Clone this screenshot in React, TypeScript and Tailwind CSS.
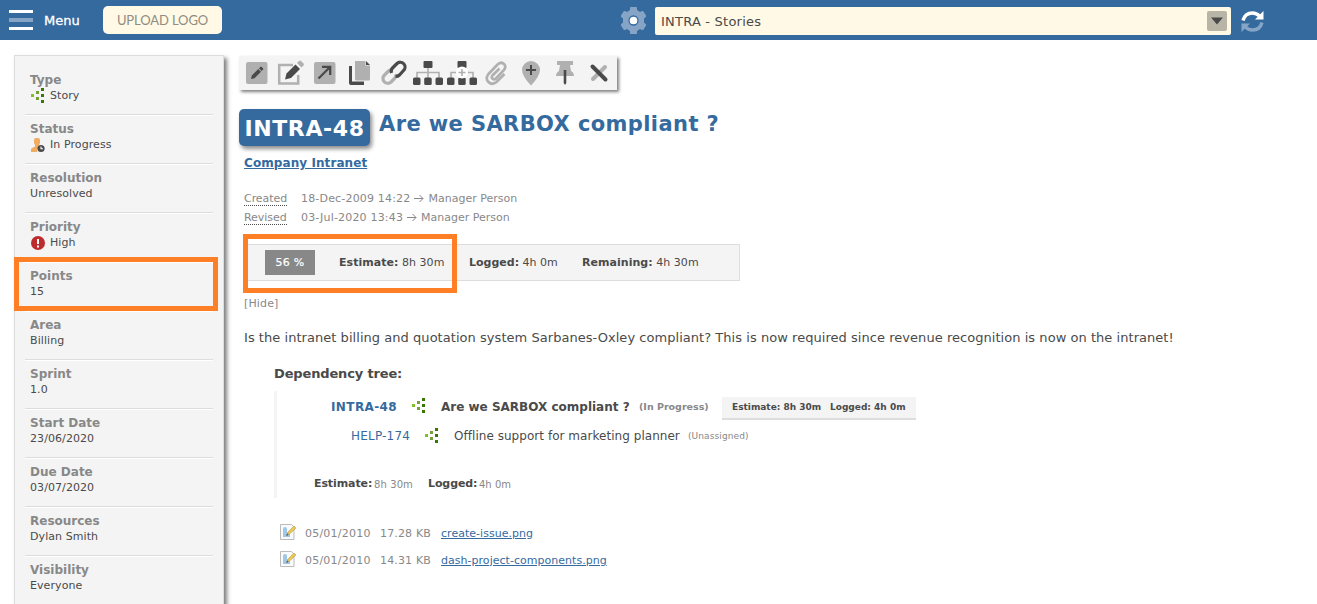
import type { ReactNode } from "react";

function StoryIcon({ className = "" }: { className?: string }) {
  return (
    <svg className={`shrink-0 ${className}`} width="14" height="15" viewBox="0 0 14 15" shapeRendering="crispEdges">
      <rect x="0" y="6" width="3" height="3" fill="#83bf2b" />
      <rect x="5" y="3" width="3" height="3" fill="#73a137" />
      <rect x="5" y="9" width="3" height="3" fill="#73a137" />
      <rect x="10" y="0" width="3" height="3" fill="#387800" />
      <rect x="10" y="6" width="3" height="3" fill="#387800" />
      <rect x="10" y="12" width="3" height="3" fill="#387800" />
    </svg>
  );
}

function PersonIcon() {
  return (
    <svg className="mr-[5px] ml-px shrink-0" width="14" height="15" viewBox="0 0 14 15">
      <path d="M3 2q0-2 2-2h2q2 0 2 2v3L8 7v1.500L6.500 10 6 14H0v-2.500Q0 10 2 9.500L4 8.500V7L3 5z" fill="#f0ad62" />
      <circle cx="10" cy="10.500" r="3.600" fill="#4a4a4a" />
      <path d="M10 8.500v2.200h2" stroke="#fff" fill="none" strokeWidth="1.100" />
    </svg>
  );
}

function HighIcon() {
  return (
    <svg className="mr-[5px] ml-px shrink-0" width="14" height="14" viewBox="0 0 14 14">
      <circle cx="7" cy="7" r="7" fill="#bd2c2c" />
      <path d="M6 3h2v5H6zM6 9.500h2v2H6z" fill="#fff" />
    </svg>
  );
}

const fields: { label: string; value: string; icon?: ReactNode }[] = [
  { label: "Type", value: "Story", icon: <StoryIcon className="mr-[5px] mb-px ml-px" /> },
  { label: "Status", value: "In Progress", icon: <PersonIcon /> },
  { label: "Resolution", value: "Unresolved" },
  { label: "Priority", value: "High", icon: <HighIcon /> },
  { label: "Points", value: "15" },
  { label: "Area", value: "Billing" },
  { label: "Sprint", value: "1.0" },
  { label: "Start Date", value: "23/06/2020" },
  { label: "Due Date", value: "03/07/2020" },
  { label: "Resources", value: "Dylan Smith" },
  { label: "Visibility", value: "Everyone" },
];

function Header() {
  return (
    <header className="flex h-10 shrink-0 items-center bg-[#356a9f]">
      <svg className="ml-[9px]" width="24" height="22" viewBox="0 0 24 22" shapeRendering="crispEdges">
        <rect y="1" width="24" height="3" fill="#fff" />
        <rect y="9" width="24" height="4" fill="#86a5c6" />
        <rect y="18" width="24" height="3" fill="#fff" />
      </svg>
      <span className="ml-[11px] w-[48px] pt-px text-[13px] text-white [-webkit-text-stroke:0.3px_white]">Menu</span>
      <button className="ml-[11px] h-7 w-[119px] rounded-[5px] bg-[#fff9e6] pt-px font-[Lato] text-[13px] tracking-[-0.1px] text-[#8f8d80]">
        UPLOAD LOGO
      </button>
      <svg className="ml-[398px]" width="27" height="27" viewBox="0 0 27 27">
        <path
          d="M10 1q0-1 1-1h5q1 0 1 1v2l3 2 2-1q1-.4 1.500.5l2.500 4q.5 1-.3 1.500L24 11.500v4l1.700 1.500q.8.500.3 1.500l-2.500 4q-.5.800-1.500.5l-2-1-3 2v2q0 1-1 1h-5q-1 0-1-1v-2l-3-2-2 1q-1 .3-1.500-.5L1 18.500q-.5-1 .3-1.500L3 15.500v-4L1.300 10Q.5 9.500 1 8.500l2.500-4Q4 3.600 5 4l2 1 3-2z"
          fill="#86a5c6"
        />
        <circle cx="13.500" cy="13.500" r="4.500" fill="#fff" stroke="#356a9f" strokeWidth="1.300" />
      </svg>
      <div className="mt-[2px] ml-2 flex h-7 w-[576px] items-center justify-between rounded-[2px] bg-[#fff9e6] pr-1 pl-[6px] text-[13px] text-[#4a4a4a]">
        <span className="pt-px tracking-[0.22px]">INTRA - Stories</span>
        <span className="flex size-5 items-center justify-center rounded-[2px] bg-[#b8b5a7]">
          <svg width="12" height="8" viewBox="0 0 12 8">
            <path d="M0 .5h12L6 7.500z" fill="#4a4a4a" />
          </svg>
        </span>
      </div>
      <svg className="mt-[3px] ml-[10px]" width="23" height="23" viewBox="0 0 23 23">
        <path d="M2 10.500Q4 3 11.500 3 15.500 3 18.500 6" fill="none" stroke="#fff" strokeWidth="3.400" />
        <path d="M22.500 1v8.500H14z" fill="#fff" />
        <path d="M21 12.500Q19 20 11.500 20 7.500 20 4.500 17" fill="none" stroke="#86a5c6" strokeWidth="3.400" />
        <path d="M.5 22v-8.500H9z" fill="#86a5c6" />
      </svg>
    </header>
  );
}

function Sidebar() {
  return (
    <aside className="mt-[15px] ml-[14px] h-[600px] w-[210px] shrink-0 border border-[#ddd] bg-[#f4f4f4] px-[10px] pt-[10px] shadow-[3px_3px_4px_rgba(0,0,0,0.5)]">
      {fields.map((f) => (
        <div key={f.label} className="h-[49px] border-t border-b border-t-white border-b-[#ddd] pt-[5px] pl-[5px] first:border-t-transparent">
          <div className="h-4 text-[12px] leading-4 font-bold text-[#888]">{f.label}</div>
          <div className="flex h-4 items-center text-[11px] leading-4 text-[#4a4a4a]">
            {f.icon}
            <span className="tracking-[0.08px]">{f.value}</span>
          </div>
        </div>
      ))}
    </aside>
  );
}

const D = "#4a4a4a";
const G = "#b0b0b0";

const tools: ReactNode[] = [
  <>
    <rect x="4" y="2" width="21.500" height="22" rx="2" fill={G} />
    <path d="M9 19l.8-3.500 6.500-6.500 2.700 2.700-6.500 6.500zM17 8.300l1.500-1.500q.6-.4 1.200.2l1.400 1.400q.5.600 0 1.200l-1.500 1.400z" fill={D} />
  </>,
  <>
    <path d="M17 5H3.200v18.500h19V15" fill="none" stroke={G} strokeWidth="2.500" />
    <path d="M9 19.500l1.500-6 9-9 4.500 4.500-9 9z" fill={D} />
    <path d="M21 3l2-2q1-.8 2 0l2.500 2.500q.8 1 0 2l-2 2z" fill={G} />
  </>,
  <>
    <rect x="4" y="2" width="21.500" height="22" rx="2" fill={G} />
    <path d="M8.500 18.500L20 7M12 6.800h8.200V15" fill="none" stroke={D} strokeWidth="2.300" />
  </>,
  <>
    <path d="M4 6h3v15.500h12V25H6q-2 0-2-2z" fill={D} />
    <path d="M10 1h10.500v4.500H25V19q0 1.500-1.500 1.500h-12q-1.500 0-1.500-1.500z" fill={G} />
    <path d="M21 1l4 4h-4z" fill={D} />
  </>,
  <>
    <path d="M13.500 9.500Q11 9.500 9.500 11L5.500 15a4.600 4.600 0 0 0 6.500 7l3.500-3.500q2-2 1.500-4.500" fill="none" stroke={G} strokeWidth="3.200" />
    <path d="M16.500 16.500Q19 16.500 20.500 15l4-4.500A4.600 4.600 0 0 0 18 3.500L13.500 8q-2 2-1 5" fill="none" stroke={D} strokeWidth="3.200" />
  </>,
  <>
    <path d="M15 7v11M4 18v-5.500h22V18" fill="none" stroke={G} strokeWidth="1.600" />
    <rect x="10.500" y="1" width="9" height="7" rx="1" fill={D} />
    <rect x="0" y="17.500" width="7.500" height="7.500" rx="1.500" fill={D} />
    <rect x="11.200" y="17.500" width="7.500" height="7.500" rx="1.500" fill={D} />
    <rect x="22.500" y="17.500" width="7.500" height="7.500" rx="1.500" fill={D} />
  </>,
  <>
    <path d="M4 18v-5.500h22V18" fill="none" stroke={G} strokeWidth="1.600" />
    <rect x="10.500" y="1" width="9" height="7" rx="1" fill={D} />
    <rect x="0" y="17.500" width="7.500" height="7.500" rx="1.500" fill={D} />
    <rect x="11.200" y="17.500" width="7.500" height="7.500" rx="1.500" fill={D} />
    <rect x="22.500" y="17.500" width="7.500" height="7.500" rx="1.500" fill={D} />
    <circle cx="15" cy="12.500" r="6" fill="#fff" />
    <path d="M15 9v7M11.500 12.500h7" stroke={G} strokeWidth="1.600" />
  </>,
  <path
    d="M18.500 8.500l-7 7q-1.500 2 0 3.200t3.200 0l8.300-8.700q2.500-3.500 0-6t-6 0L7.500 14q-3.500 4.500 0 8t8 0l8-8"
    fill="none"
    stroke={G}
    strokeWidth="2.700"
  />,
  <>
    <path d="M15 1a9 9 0 0 1 9 9q0 6-9 15.500Q6 16 6 10a9 9 0 0 1 9-9z" fill={G} />
    <path d="M15 5v10M10 10h10" stroke={D} strokeWidth="2" />
  </>,
  <>
    <path d="M7 1h16v4h-3l1 6q3 1.500 3 5H6q0-3.500 3-5l1-6H7z" fill={G} />
    <path d="M13.700 10h2.600v13L15 25l-1.300-2z" fill={D} />
  </>,
  <>
    <path d="M9 19L21 7" stroke={G} strokeWidth="4" strokeLinecap="round" />
    <path d="M8.500 6.500l13 13" stroke={D} strokeWidth="4" strokeLinecap="round" />
  </>,
];

function Toolbar() {
  return (
    <div className="flex h-[34px] w-[378px] items-center bg-[#f4f4f4] pl-[3px] shadow-[2px_2px_3px_rgba(0,0,0,0.5)]">
      {tools.map((t, i) => (
        <svg key={i} className="mr-[4.200px] shrink-0" width="30" height="26" viewBox="0 0 30 26">
          {t}
        </svg>
      ))}
    </div>
  );
}

function Arrow() {
  return (
    <svg className="mx-1 shrink-0" width="10" height="9" viewBox="0 0 10 9">
      <path d="M0 4.500h9M5.500 1L9 4.500 5.500 8" fill="none" stroke="#888" />
    </svg>
  );
}

function Stamp({ label, date }: { label: string; date: string }) {
  return (
    <div className="flex h-[19px] items-center pl-[5px] text-[11px] leading-[13px] text-[#888]">
      <span className="w-[57px]">
        <span className="inline-block border-b border-dotted border-[#4a4a4a] leading-[12px] tracking-[-0.05px]">{label}</span>
      </span>
      <span className="tracking-[0.18px]">{date}</span>
      <Arrow />
      <span>Manager Person</span>
    </div>
  );
}

function FileRow({ size, name }: { size: string; name: string }) {
  return (
    <div className="flex h-[27px] items-center pl-[41px] text-[11px] text-[#888]">
      <svg className="mr-[9px] mb-[3px]" width="16" height="16" viewBox="0 0 16 16">
        <path d="M.5.500h11l2.500 2.500v12.500H.5z" fill="#fafafa" stroke="#bbb" />
        <path d="M3 5q0-2 2-2t2 2v3l3 1.500V13H3z" fill="#9fc8e8" />
        <path d="M7 11l1-3 6-6 2 2-6.500 6z" fill="#ecc94f" stroke="#a98c50" strokeWidth=".5" />
        <path d="M6 12l1.200-2.500L8.500 11z" fill="#555" />
      </svg>
      <span className="w-[75px] pt-px tracking-[0.22px]">05/01/2010</span>
      <span className="w-[61px] pt-px tracking-[0.15px]">{size}</span>
      <a className="pt-px tracking-[0.03px] text-[#356a9f] underline">{name}</a>
    </div>
  );
}

export default function App() {
  return (
    <div className="relative flex h-[604px] w-[1317px] flex-col overflow-hidden bg-white font-['DejaVu_Sans',sans-serif]">
      <Header />
      <div className="flex min-h-0 flex-1">
        <Sidebar />
        <main className="ml-[15px] flex-1 pt-4 text-[#4a4a4a]">
          <Toolbar />
          <div className="mt-[19px] flex h-[37px]">
            <span className="flex w-[131px] items-center justify-center rounded-[5px] bg-[#356a9f] pt-px text-[22px] font-bold tracking-[0.6px] text-white shadow-[2px_3px_4px_rgba(0,0,0,0.45)]">
              INTRA-48
            </span>
            <h1 className="ml-[9px] pt-px text-[21px] leading-[28px] font-bold tracking-[0.4px] whitespace-nowrap text-[#356a9f]">
              Are we SARBOX compliant ?
            </h1>
          </div>
          <div className="mt-[9px] pl-[5px] text-[12px] leading-[17px] font-bold tracking-[0.08px] text-[#356a9f] underline">Company Intranet</div>
          <div className="mt-[17px]">
            <Stamp label="Created" date="18-Dec-2009 14:22" />
            <Stamp label="Revised" date="03-Jul-2020 13:43" />
          </div>
          <div className="mt-[17px] ml-[5px] flex h-[37px] w-[496px] items-center border border-[#ddd] bg-[#f4f4f4] pl-5 text-[11px] whitespace-nowrap">
            <span className="flex h-[25px] w-[50px] items-center justify-center bg-[#888] pt-px tracking-[0.3px] text-white [-webkit-text-stroke:0.2px_white]">56 %</span>
            <span className="ml-6 w-[130px] pt-px tracking-[0.04px]"><b>Estimate:</b> 8h 30m</span>
            <span className="w-[113px] pt-px"><b>Logged:</b> 4h 0m</span>
            <span className="pt-px tracking-[0.04px]"><b>Remaining:</b> 4h 30m</span>
          </div>
          <div className="mt-[15px] pl-[5px] text-[11px] leading-4 tracking-[0.15px] text-[#888]">[Hide]</div>
          <p className="mt-[18px] pl-[5px] text-[13px] leading-4 tracking-[0.043px] whitespace-nowrap">
            Is the intranet billing and quotation system Sarbanes-Oxley compliant? This is now required since revenue recognition is now on the intranet!
          </p>
          <h2 className="mt-5 pl-[35px] text-[13px] leading-4 font-bold tracking-[-0.15px]">Dependency tree:</h2>
          <div className="mt-[9px] ml-[35px] h-[107px] border-l-[3px] border-[#f4f4f4] whitespace-nowrap">
            <div className="flex h-[30px] items-center pl-[54px] font-bold">
              <span className="w-[81px] pt-px text-[12px] tracking-[0.4px] text-[#356a9f]">INTRA-48</span>
              <StoryIcon className="mr-[15px] mb-px" />
              <span className="w-[198px] pt-px text-[12px]">Are we SARBOX compliant ?</span>
              <span className="w-[83px] pt-[3px] text-[9.500px] text-[#888]">(In Progress)</span>
              <span className="mt-[5px] flex h-[23px] w-[194px] items-center border-b-2 border-[#ddd] bg-[#f4f4f4] pl-[10px] text-[9px]">
                <span className="w-[98px]">Estimate: 8h 30m</span>
                <span>Logged: 4h 0m</span>
              </span>
            </div>
            <div className="flex h-[29px] items-center pl-[74px] text-[12px]">
              <span className="w-[74px] tracking-[0.2px] text-[#356a9f]">HELP-174</span>
              <StoryIcon className="mr-[15px] mb-px" />
              <span className="w-[234px] tracking-[0.04px]">Offline support for marketing planner</span>
              <span className="pt-[3px] text-[9px] tracking-[0.1px] text-[#888]">(Unassigned)</span>
            </div>
            <div className="mt-[25px] flex h-[18px] items-center pl-[37px] text-[11px]">
              <b className="w-[60px] pt-px tracking-[-0.1px]">Estimate:</b>
              <span className="w-[54px] text-[10px] tracking-[0.1px] text-[#888]">8h 30m</span>
              <b className="w-[51px] pt-px tracking-[-0.1px]">Logged:</b>
              <span className="text-[10px] text-[#888]">4h 0m</span>
            </div>
          </div>
          <div className="mt-[22px]">
            <FileRow size="17.28 KB" name="create-issue.png" />
            <FileRow size="14.31 KB" name="dash-project-components.png" />
          </div>
        </main>
      </div>
      <div className="absolute top-[257px] left-[14px] h-[54px] w-[204px] border-[5px] border-[#ff7f27]" />
      <div className="absolute top-[234px] left-[243px] h-[59px] w-[214px] border-[5px] border-[#ff7f27]" />
    </div>
  );
}
